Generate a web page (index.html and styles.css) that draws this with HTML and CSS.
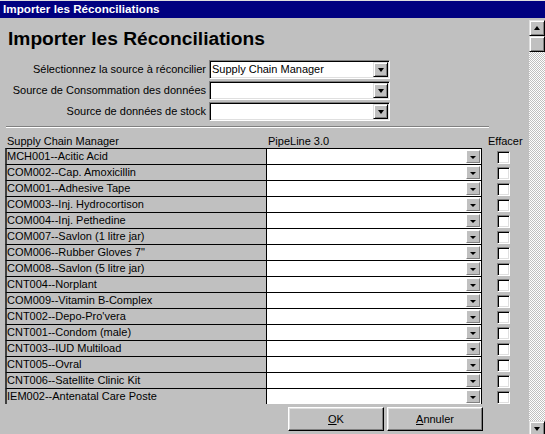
FILE: index.html
```html
<!DOCTYPE html>
<html lang="fr">
<head>
<meta charset="utf-8">
<title>Importer les Réconciliations</title>
<link rel="stylesheet" href="styles.css">
</head>
<body>
<div class="window">
  <div class="titlebar">Importer les Réconciliations</div>
  <div class="main">
    <div class="content">
      <h1 class="heading">Importer les Réconciliations</h1>
      <div class="form">
        <label class="flabel">Sélectionnez la source à réconcilier</label>
        <div class="select"><span class="select-text">Supply Chain Manager</span><span class="sbtn"><span class="tri-down"></span></span></div>
        <label class="flabel">Source de Consommation des données</label>
        <div class="select"><span class="select-text"></span><span class="sbtn"><span class="tri-down"></span></span></div>
        <label class="flabel">Source de données de stock</label>
        <div class="select"><span class="select-text"></span><span class="sbtn"><span class="tri-down"></span></span></div>
      </div>
      <div class="sep"></div>
      <div class="grid-head">
        <span class="h-name">Supply Chain Manager</span>
        <span class="h-pipe">PipeLine 3.0</span>
        <span class="h-del">Effacer</span>
      </div>
      <div class="rows">
        <div class="row"><div class="name">MCH001--Acitic Acid</div><div class="combo"><span class="cbtn"><span class="tri-small"></span></span></div><span class="check"></span></div>
        <div class="row"><div class="name">COM002--Cap. Amoxicillin</div><div class="combo"><span class="cbtn"><span class="tri-small"></span></span></div><span class="check"></span></div>
        <div class="row"><div class="name">COM001--Adhesive Tape</div><div class="combo"><span class="cbtn"><span class="tri-small"></span></span></div><span class="check"></span></div>
        <div class="row"><div class="name">COM003--Inj. Hydrocortison</div><div class="combo"><span class="cbtn"><span class="tri-small"></span></span></div><span class="check"></span></div>
        <div class="row"><div class="name">COM004--Inj. Pethedine</div><div class="combo"><span class="cbtn"><span class="tri-small"></span></span></div><span class="check"></span></div>
        <div class="row"><div class="name">COM007--Savlon (1 litre jar)</div><div class="combo"><span class="cbtn"><span class="tri-small"></span></span></div><span class="check"></span></div>
        <div class="row"><div class="name">COM006--Rubber Gloves 7"</div><div class="combo"><span class="cbtn"><span class="tri-small"></span></span></div><span class="check"></span></div>
        <div class="row"><div class="name">COM008--Savlon (5 litre jar)</div><div class="combo"><span class="cbtn"><span class="tri-small"></span></span></div><span class="check"></span></div>
        <div class="row"><div class="name">CNT004--Norplant</div><div class="combo"><span class="cbtn"><span class="tri-small"></span></span></div><span class="check"></span></div>
        <div class="row"><div class="name">COM009--Vitamin B-Complex</div><div class="combo"><span class="cbtn"><span class="tri-small"></span></span></div><span class="check"></span></div>
        <div class="row"><div class="name">CNT002--Depo-Pro'vera</div><div class="combo"><span class="cbtn"><span class="tri-small"></span></span></div><span class="check"></span></div>
        <div class="row"><div class="name">CNT001--Condom (male)</div><div class="combo"><span class="cbtn"><span class="tri-small"></span></span></div><span class="check"></span></div>
        <div class="row"><div class="name">CNT003--IUD Multiload</div><div class="combo"><span class="cbtn"><span class="tri-small"></span></span></div><span class="check"></span></div>
        <div class="row"><div class="name">CNT005--Ovral</div><div class="combo"><span class="cbtn"><span class="tri-small"></span></span></div><span class="check"></span></div>
        <div class="row"><div class="name">CNT006--Satellite Clinic Kit</div><div class="combo"><span class="cbtn"><span class="tri-small"></span></span></div><span class="check"></span></div>
        <div class="row"><div class="name">IEM002--Antenatal Care Poste</div><div class="combo"><span class="cbtn"><span class="tri-small"></span></span></div><span class="check"></span></div>
      </div>
      <div class="actions">
        <button class="btn"><u>O</u>K</button>
        <button class="btn"><u>A</u>nnuler</button>
      </div>
    </div>
    <div class="scrollbar">
      <div class="sb-btn"><span class="tri-up"></span></div>
      <div class="sb-thumb"></div>
      <div class="sb-track"></div>
      <div class="sb-btn"><span class="tri-down"></span></div>
    </div>
  </div>
</div>
</body>
</html>
```
FILE: styles.css
```css
* { box-sizing: border-box; }
html, body {
  margin: 0;
  padding: 0;
  width: 545px;
  height: 434px;
  overflow: hidden;
  background: #c0c0c0;
}
body {
  font-family: "Liberation Sans", Arial, sans-serif;
  font-size: 11px;
  color: #000;
}
.window {
  width: 545px;
  display: flex;
  flex-direction: column;
}
.titlebar {
  height: 18px;
  border-top: 1px solid #dfdfdf;
  background: #000080;
  color: #fff;
  font-weight: bold;
  font-size: 11.7px;
  line-height: 16px;
  padding-left: 3px;
  white-space: nowrap;
}
.main {
  display: flex;
  align-items: flex-start;
}
.content {
  width: 529px;
  display: flex;
  flex-direction: column;
}
.heading {
  margin: 10px 0 0 8px;
  font-size: 19.2px;
  line-height: 22px;
  font-weight: bold;
  white-space: nowrap;
}
.form {
  margin-top: 10px;
  padding-left: 3px;
  display: grid;
  grid-template-columns: 203px 181px;
  column-gap: 3px;
  row-gap: 2px;
}
.flabel {
  text-align: right;
  line-height: 19px;
  height: 19px;
  white-space: nowrap;
}
.select {
  height: 19px;
  background: #fff;
  border: 1px solid;
  border-color: #808080 #fff #fff #808080;
  box-shadow: inset 1px 1px 0 #000, inset -1px -1px 0 #dfdfdf;
  display: flex;
  align-items: center;
  padding: 1px 1px 1px 2px;
}
.select-text {
  flex: 1;
  line-height: 15px;
  white-space: nowrap;
}
.sbtn {
  width: 15px;
  height: 15px;
  background: #c0c0c0;
  border: 1px solid;
  border-color: #dfdfdf #000 #000 #dfdfdf;
  box-shadow: inset 1px 1px 0 #fff, inset -1px -1px 0 #808080;
  display: flex;
  align-items: center;
  justify-content: center;
}
.tri-down {
  width: 0;
  height: 0;
  border-left: 3.5px solid transparent;
  border-right: 3.5px solid transparent;
  border-top: 4px solid #000;
}
.tri-up {
  width: 0;
  height: 0;
  border-left: 3.5px solid transparent;
  border-right: 3.5px solid transparent;
  border-bottom: 4px solid #000;
}
.tri-small {
  width: 0;
  height: 0;
  border-left: 3px solid transparent;
  border-right: 3px solid transparent;
  border-top: 3px solid #000;
  margin-top: 1px;
}
.sep {
  margin: 5px 0 0 6px;
  width: 483px;
  height: 2px;
  border-top: 1px solid #808080;
  border-bottom: 1px solid #fff;
}
.grid-head {
  margin-top: 6px;
  height: 14px;
  line-height: 14px;
  padding-left: 6px;
  display: flex;
  white-space: nowrap;
}
.h-name { width: 261px; padding-left: 1px; }
.h-pipe { width: 215px; padding-left: 1px; }
.h-del { margin-left: 6px; }
.rows {
  display: flex;
  flex-direction: column;
  padding-left: 5px;
}
.row {
  display: flex;
  height: 16px;
}
.name {
  width: 262px;
  height: 16px;
  border-top: 1px solid #000;
  border-left: 2px solid;
  border-left-color: #404040;
  border-right: 1px solid #000;
  line-height: 15px;
  white-space: nowrap;
  overflow: hidden;
}
.combo {
  width: 215px;
  height: 16px;
  background: #fff;
  border-top: 1px solid #000;
  border-right: 1px solid #000;
  display: flex;
  justify-content: flex-end;
  align-items: flex-start;
  padding: 1px 1px 0 0;
}
.cbtn {
  width: 14px;
  height: 13px;
  background: #c0c0c0;
  border: 1px solid;
  border-color: #fff #808080 #808080 #fff;
  display: flex;
  align-items: center;
  justify-content: center;
}
.check {
  width: 13px;
  height: 13px;
  margin: 3px 0 0 15px;
  background: #fff;
  border: 1px solid;
  border-color: #808080 #fff #fff #808080;
  box-shadow: inset 1px 1px 0 #000, inset -1px -1px 0 #dfdfdf;
}
.actions {
  margin-top: 3px;
  padding-left: 288px;
  display: flex;
  gap: 3px;
}
.btn {
  width: 96px;
  height: 24px;
  padding: 0;
  font-family: "Liberation Sans", Arial, sans-serif;
  font-size: 11px;
  color: #000;
  background: #c0c0c0;
  border: 1px solid;
  border-color: #fff #000 #000 #fff;
  box-shadow: inset -1px -1px 0 #808080, inset 1px 1px 0 #dfdfdf;
}
.scrollbar {
  margin-top: 2px;
  width: 16px;
  height: 417px;
  display: flex;
  flex-direction: column;
}
.sb-btn, .sb-thumb {
  width: 16px;
  height: 16px;
  flex: none;
  background: #c0c0c0;
  border: 1px solid;
  border-color: #dfdfdf #000 #000 #dfdfdf;
  box-shadow: inset 1px 1px 0 #fff, inset -1px -1px 0 #808080;
  display: flex;
  align-items: center;
  justify-content: center;
}
.sb-track {
  flex: 1;
  background-color: #fff;
  background-image: repeating-conic-gradient(#c0c0c0 0 25%, #fff 0 50%);
  background-size: 2px 2px;
}
```
